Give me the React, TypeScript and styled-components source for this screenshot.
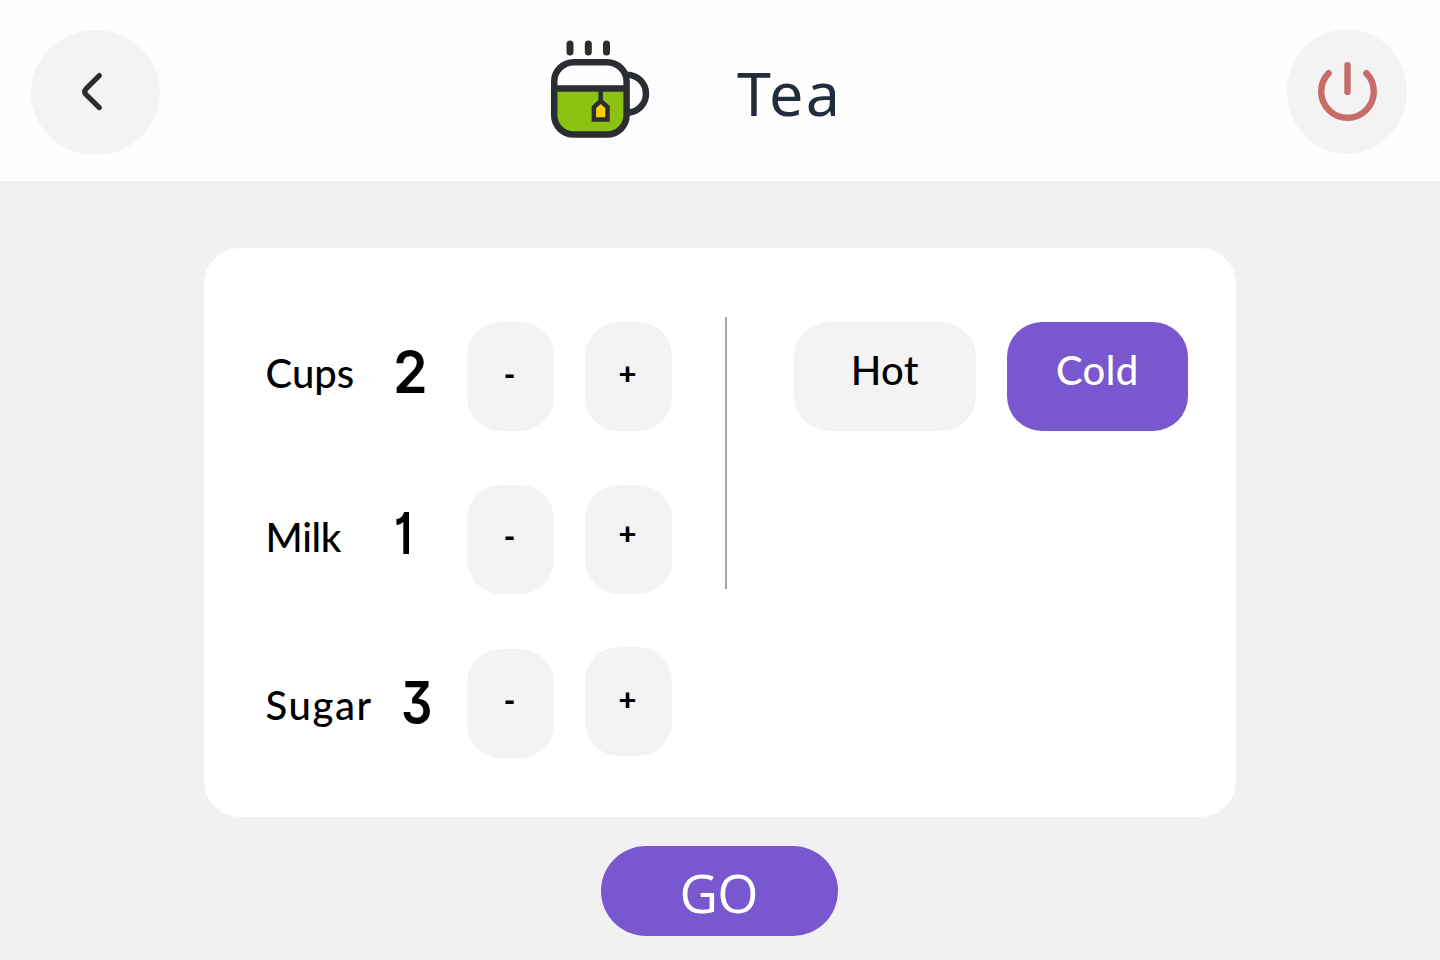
import React, { useState } from 'react';
import styled, { createGlobalStyle } from 'styled-components';

const GlobalStyle = createGlobalStyle`
  * { box-sizing: border-box; }
  body { margin: 0; background: #f1f1f1; font-family: Lato, "Open Sans", sans-serif; color: #000; }
  button { border: 0; padding: 0; font: inherit; color: inherit; cursor: pointer; }
`;

const Page = styled.div`
  height: 960px;
  display: flex;
  flex-direction: column;
  align-items: center;
  overflow: hidden;
`;

const Header = styled.header`
  width: 100%;
  height: 181px;
  padding: 29px 33px 0 31px;
  display: flex;
  align-items: flex-start;
  background: #fefefe;
`;

const RoundButton = styled.button<{ $width: number; $top?: number }>`
  width: ${(p) => p.$width}px;
  height: 125px;
  margin-top: ${(p) => p.$top ?? 0}px;
  border-radius: 50%;
  background: #f3f3f3;
  svg { display: block; }
`;

const Brand = styled.div`
  margin: 0 auto 0 389px;
  display: flex;
  padding-top: 9px;
`;

const Title = styled.h1`
  margin: 19px 0 0 86px;
  font: 400 61px/72px "Noto Sans", sans-serif;
  letter-spacing: 2.4px;
  color: #212c3d;
`;

const Card = styled.main`
  width: 1032px;
  height: 569px;
  margin-top: 67px;
  padding: 69px 48px 0 61px;
  display: flex;
  background: #fff;
  border-radius: 36px;
`;

const Amounts = styled.section`
  width: 460px;
  padding-top: 5px;
  display: flex;
  flex-direction: column;
  gap: 53.5px;
`;

const Row = styled.div`
  height: 109px;
  display: grid;
  grid-template-columns: 128px 74px 87px 87px;
  align-items: start;
`;

const Label = styled.span<{ $top: number; $spacing: number }>`
  margin: ${(p) => p.$top}px 0 0 0.6px;
  font-size: 40px;
  font-weight: 500;
  line-height: 40px;
  letter-spacing: ${(p) => p.$spacing}px;
  white-space: nowrap;
`;

const Count = styled.span<{ $top: number; $left: number; $stretch: number }>`
  justify-self: start;
  margin: ${(p) => p.$top}px 0 0 ${(p) => p.$left}px;
  font: 600 58px/60px Inter, sans-serif;
  font-feature-settings: "cv01", "cv09";
  transform: scaleX(${(p) => p.$stretch});
  transform-origin: left;
`;

const Step = styled.button<{ $top?: number; $left?: number; $text: number }>`
  width: 87px;
  height: 109px;
  margin: ${(p) => p.$top ?? 0}px 0 0 ${(p) => p.$left ?? 0}px;
  padding: 0 2px ${(p) => p.$text}px 0;
  border-radius: 34px;
  background: #f3f3f3;
  font-size: 31px;
  font-weight: 900;
  line-height: 32px;
`;

const Divider = styled.div`
  width: 2px;
  height: 272px;
  background: #a8a8a8;
`;

const Temperatures = styled.section`
  margin: 5px 0 0 67px;
  display: flex;
  align-items: flex-start;
  gap: 31px;
`;

const Choice = styled.button<{ $active: boolean }>`
  width: 181.5px;
  height: 109px;
  padding-bottom: 14px;
  border-radius: 35px;
  background: ${(p) => (p.$active ? '#7957ce' : '#f3f3f3')};
  color: ${(p) => (p.$active ? '#fff' : '#000')};
  font-size: 40px;
  font-weight: 500;
  line-height: 40px;
  letter-spacing: 0.4px;
`;

const Go = styled.button`
  width: 237px;
  height: 90px;
  margin: 29px 0 0 -1px;
  padding: 4px 2px 0 0;
  border-radius: 45px;
  background: #7957ce;
  color: #fff;
  font: 400 53px/60px "Open Sans", sans-serif;
  letter-spacing: -1px;
`;

const MugIcon = () => (
  <svg width="102" height="102" viewBox="549 38 102 102" fill="none" stroke="#2a2e33" strokeWidth="6.5">
    <path d="M554 88.5H627V115a19.7 19.7 0 0 1-19.7 19.7H574A19.7 19.7 0 0 1 554.2 115Z" fill="#8bc111" stroke="none" />
    <path d="M627 74.7a19 19 0 0 1 0 38" />
    <rect x="554.2" y="62.2" width="72.4" height="72.4" rx="19.5" />
    <path d="M554 88.6h73" />
    <path d="M570 44v8M588.3 44v8M606.5 44v8" strokeWidth="7" strokeLinecap="round" />
    <path d="M600.7 90v12" strokeWidth="4.5" />
    <path d="M593.9 107.1l6.8-6 6.8 6v12.5h-13.6z" fill="#ffcf00" strokeWidth="4.5" />
  </svg>
);

const BackIcon = () => (
  <svg width="129" height="125" viewBox="31 30 129 125" fill="none" stroke="#2a2e33" strokeWidth="5.2" strokeLinecap="round">
    <path d="M99.3 75.6L86 88.9q-2.6 2.8 0 5.6L99.3 107.6" />
  </svg>
);

const PowerIcon = () => (
  <svg width="120.5" height="125" viewBox="1287 29 120.5 125" fill="none" stroke="#c86b6b" strokeWidth="6.4" strokeLinecap="round">
    <path d="M1328.6 73.2a26.3 26.3 0 1 0 37.8 0M1347.5 65.3v26.6" />
  </svg>
);

const ingredients = [
  { name: 'Cups', labelTop: 31, spacing: 0, count: 2, countTop: 20, countLeft: 0, stretch: 0.96, minusTop: 0, minusText: 6, plusText: 7 },
  { name: 'Milk', labelTop: 32, spacing: -0.4, count: 1, countTop: 18.5, countLeft: 1, stretch: 0.76, minusTop: 0, minusText: 6, plusText: 12 },
  { name: 'Sugar', labelTop: 38, spacing: 1.6, count: 3, countTop: 25, countLeft: 8, stretch: 0.85, minusTop: 2, minusText: 8, plusText: 5 },
];

export default function App() {
  const [counts, setCounts] = useState(ingredients.map((i) => i.count));
  const [temperature, setTemperature] = useState('Cold');
  const change = (index: number, by: number) =>
    setCounts(counts.map((c, i) => (i === index ? Math.max(0, c + by) : c)));

  return (
    <Page>
      <GlobalStyle />
      <Header>
        <RoundButton $width={129} $top={1} aria-label="Back"><BackIcon /></RoundButton>
        <Brand>
          <MugIcon />
          <Title>Tea</Title>
        </Brand>
        <RoundButton $width={120.5} aria-label="Power"><PowerIcon /></RoundButton>
      </Header>
      <Card>
        <Amounts>
          {ingredients.map((item, i) => (
            <Row key={item.name}>
              <Label $top={item.labelTop} $spacing={item.spacing}>{item.name}</Label>
              <Count $top={item.countTop} $left={item.countLeft} $stretch={item.stretch}>{counts[i]}</Count>
              <Step $top={item.minusTop} $text={item.minusText} onClick={() => change(i, -1)}>-</Step>
              <Step $left={31} $text={item.plusText} onClick={() => change(i, 1)}>+</Step>
            </Row>
          ))}
        </Amounts>
        <Divider />
        <Temperatures>
          {['Hot', 'Cold'].map((name) => (
            <Choice key={name} $active={temperature === name} onClick={() => setTemperature(name)}>{name}</Choice>
          ))}
        </Temperatures>
      </Card>
      <Go>GO</Go>
    </Page>
  );
}
